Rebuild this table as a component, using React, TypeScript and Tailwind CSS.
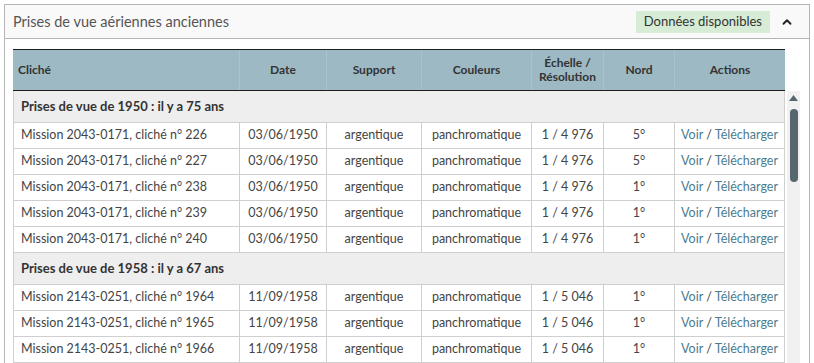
import { ChevronUp } from "lucide-react";

type Row = {
  cliche: string;
  date: string;
  support: string;
  couleurs: string;
  echelle: string;
  nord: string;
};

type Group = { title: string; rows: Row[] };

const groups: Group[] = [
  {
    title: "Prises de vue de 1950 : il y a 75 ans",
    rows: [
      ["226", "5°"],
      ["227", "5°"],
      ["238", "1°"],
      ["239", "1°"],
      ["240", "1°"],
    ].map(([n, nord]) => ({
      cliche: `Mission 2043-0171, cliché n° ${n}`,
      date: "03/06/1950",
      support: "argentique",
      couleurs: "panchromatique",
      echelle: "1 / 4 976",
      nord,
    })),
  },
  {
    title: "Prises de vue de 1958 : il y a 67 ans",
    rows: ["1964", "1965", "1966"].map((n) => ({
      cliche: `Mission 2143-0251, cliché n° ${n}`,
      date: "11/09/1958",
      support: "argentique",
      couleurs: "panchromatique",
      echelle: "1 / 5 046",
      nord: "1°",
    })),
  },
];

const cols = "grid grid-cols-[227px_87px_95px_110px_72px_71px_110px]";

function DataRow({ row }: { row: Row }) {
  const cell = "h-[26px] flex items-center justify-center border-r border-b border-[#cfcfcf]";
  return (
    <div className={`${cols} text-[12.5px] text-[#444]`}>
      <div className={`${cell} justify-start! pl-[7px] border-l`}>{row.cliche}</div>
      <div className={cell}>{row.date}</div>
      <div className={cell}>{row.support}</div>
      <div className={cell}>{row.couleurs}</div>
      <div className={cell}>{row.echelle}</div>
      <div className={cell}>{row.nord}</div>
      <div className={cell}>
        <span className="text-[#4c7c8e]">Voir</span>
        <span className="mx-[3px] text-[#444]">/</span>
        <span className="text-[#4c7c8e]">Télécharger</span>
      </div>
    </div>
  );
}

export default function App() {
  const head = "flex items-center justify-center border-r border-[#aac3cc] last:border-r-0";
  return (
    <div className="bg-white pt-[4px] px-[4px] h-[363px] overflow-hidden" style={{ fontFamily: "Lato, 'Liberation Sans', sans-serif" }}>
      <div className="border border-[#b5b5b5] w-[806px]">
        {/* Panel header */}
        <div className="h-[34px] bg-[#f9f9f9] border-b border-[#b5b5b5] flex items-center pl-[8px] pr-[15px]">
          <span className="text-[14.5px] text-[#555]">Prises de vue aériennes anciennes</span>
          <span className="ml-auto h-[22px] px-[8px] flex items-center bg-[#d6ecd5] text-[13px] text-[#333]">
            Données disponibles
          </span>
          <ChevronUp className="ml-[10px] w-[14px] h-[14px] text-[#222]" strokeWidth={3.2} />
        </div>

        {/* Body */}
        <div className="pt-[10px] pl-[8px]">
          <div className={`${cols} h-[42px] bg-[#9db9c3] border-t border-b border-[#1e1e1e] text-[12px] font-bold text-[#333] w-[772px]`}>
            <div className={`${head} justify-start! pl-[5px]`}>Cliché</div>
            <div className={head}>Date</div>
            <div className={head}>Support</div>
            <div className={head}>Couleurs</div>
            <div className={`${head} text-center leading-[14px]`}>
              Échelle /<br />Résolution
            </div>
            <div className={head}>Nord</div>
            <div className={head}>Actions</div>
          </div>

          <div className="flex">
            <div className="w-[772px] h-[290px] overflow-hidden">
              {groups.map((g) => (
                <div key={g.title}>
                  <div className="h-[32px] flex items-center pl-[7px] bg-[#eeeeee] border-l border-r border-b border-[#cfcfcf] text-[13px] font-bold text-[#333]">
                    {g.title}
                  </div>
                  {g.rows.map((r) => (
                    <DataRow key={r.cliche} row={r} />
                  ))}
                </div>
              ))}
            </div>

            {/* Scrollbar */}
            <div className="ml-[2px] w-[13px] h-[290px] bg-[#f1f1f1] flex flex-col items-center pt-[4px]">
              <svg width="9" height="6" viewBox="0 0 9 6">
                <polygon points="4.5,0 9,6 0,6" fill="#56666f" />
              </svg>
              <div className="mt-[8px] w-[8px] h-[73px] rounded-full bg-[#56666f]" />
            </div>
          </div>
        </div>
      </div>
    </div>
  );
}
